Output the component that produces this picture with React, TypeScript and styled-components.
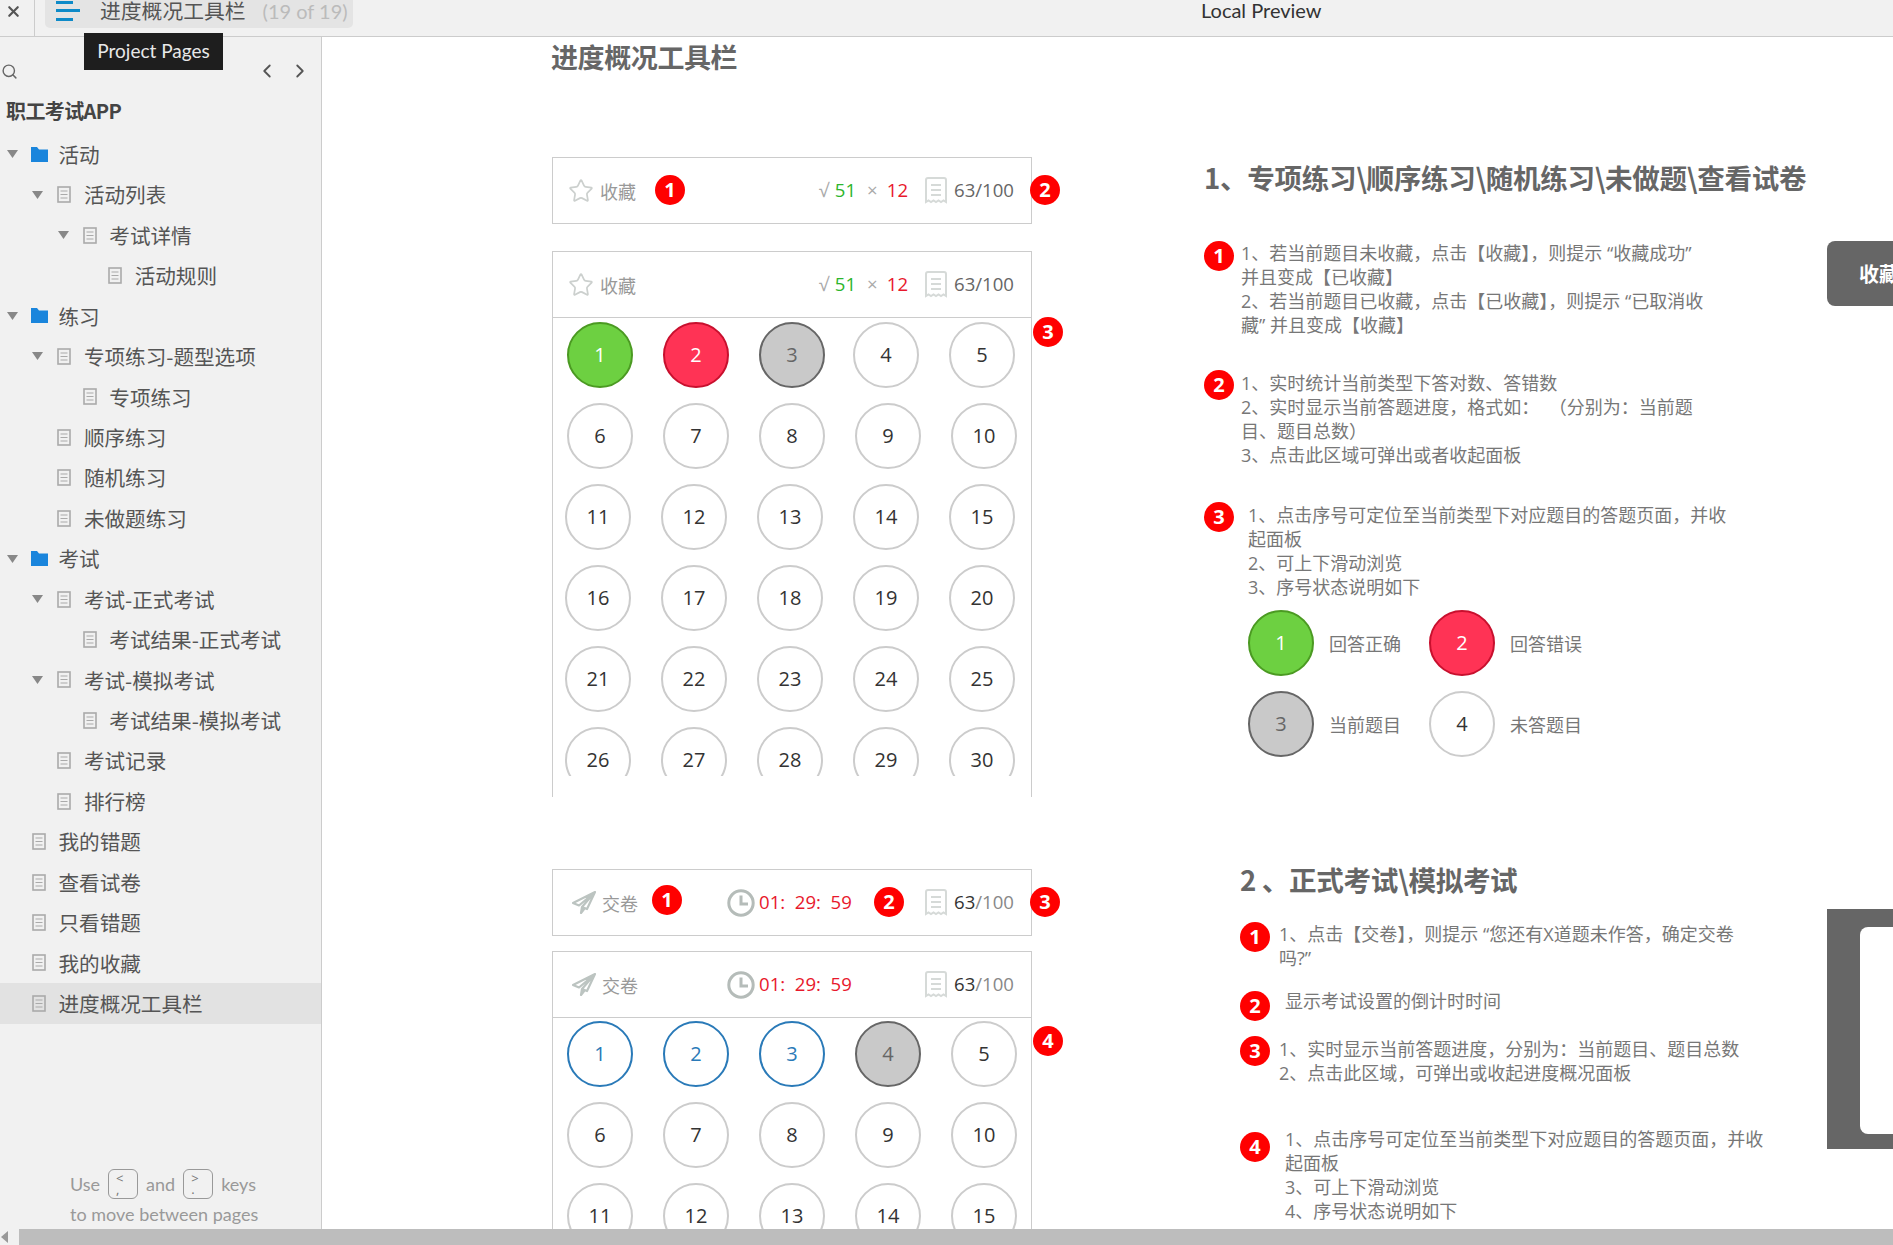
import React from "react";
import styled, { createGlobalStyle, css } from "styled-components";
import { ChevronLeft, ChevronRight, Search, Star, X } from "lucide-react";

const CJK = `"Open Sans", "Noto Sans CJK SC", sans-serif`;

const Global = createGlobalStyle`
  html, body { margin: 0; padding: 0; background: #fff; }
  body { font-family: ${CJK}; overflow: hidden; }
  * { box-sizing: border-box; }
`;

const Page = styled.div`
  position: relative;
  width: 1893px;
  height: 1245px;
  overflow: hidden;
  display: flex;
  flex-direction: column;
`;

/* ---------- top bar ---------- */
const TopBar = styled.header`
  height: 37px;
  flex: none;
  display: flex;
  align-items: flex-start;
  background: #f1f1f1;
  border-bottom: 1px solid #ccc;
`;
const CloseBox = styled.div`
  width: 35px;
  height: 36px;
  flex: none;
  border-right: 1px solid #ccc;
  padding: 3px 0 0 5px;
  color: #555;
  display: flex;
`;
const PageTab = styled.div`
  margin-left: 10px;
  width: 308px;
  height: 28px;
  flex: none;
  background: #e4e4e4;
  border-radius: 0 0 5px 5px;
  display: flex;
  align-items: center;
  padding-left: 11px;
`;
const TabTitle = styled.span`
  margin-left: 20px;
  font: 400 20.8px/28px "Noto Sans CJK SC", sans-serif;
  color: #555;
  position: relative;
  top: -4px;
  white-space: nowrap;
`;
const TabCount = styled.span`
  margin-left: 17px;
  font: 400 20px/28px Lato, sans-serif;
  color: #bbb;
  position: relative;
  top: -3px;
  white-space: nowrap;
`;
const PreviewLabel = styled.div`
  margin-left: 848px;
  font: 400 20px/20px Lato, sans-serif;
  color: #333;
  white-space: nowrap;
`;
const Tooltip = styled.div`
  position: absolute;
  left: 84px;
  top: 33px;
  width: 139px;
  height: 37px;
  background: #1e1e1e;
  color: #e8e8e8;
  font: 400 19px/36px Lato, sans-serif;
  text-align: center;
  z-index: 5;
`;

/* ---------- body ---------- */
const Body = styled.div`
  flex: 1;
  min-height: 0;
  display: flex;
`;

/* ---------- sidebar ---------- */
const Sidebar = styled.aside`
  width: 322px;
  flex: none;
  background: #f1f1f1;
  border-right: 1px solid #ccc;
  overflow: hidden;
`;
const SearchRow = styled.div`
  height: 43px;
  display: flex;
  align-items: flex-end;
  padding: 0 10px 0 1px;
  color: #666;
`;
const Pager = styled.div`
  margin-left: auto;
  display: flex;
  gap: 11px;
  color: #555;
  margin-bottom: -2px;
`;
const ProjectTitle = styled.div`
  margin-top: 16px;
  padding-left: 6px;
  font: 700 20px/30px "Noto Sans CJK SC", sans-serif;
  color: #444;
  height: 38px;
  letter-spacing: -0.6px;
`;
const Tree = styled.div`
  display: flex;
  flex-direction: column;
`;
const Row = styled.div<{ $level: number; $active?: boolean }>`
  height: 40.45px;
  display: flex;
  align-items: center;
  padding-left: ${(p) => 7 + p.$level * 25.4}px;
  font: 400 20.6px/1 "Noto Sans CJK SC", sans-serif;
  color: #555;
  background: ${(p) => (p.$active ? "#e2e2e2" : "transparent")};
  white-space: nowrap;
`;
const ArrowSlot = styled.span`
  width: 24px;
  flex: none;
  display: flex;
`;
const IconSlot = styled.span`
  width: 27.5px;
  flex: none;
  display: flex;
`;
const SideHint = styled.div`
  margin-top: 145px;
  padding-left: 70px;
  font: 400 18px/30px Lato, sans-serif;
  color: #999;
  white-space: nowrap;
`;
const HintLine = styled.div`
  display: flex;
  align-items: center;
  height: 30px;
  gap: 8px;
`;
const KeyCap = styled.span`
  width: 30px;
  height: 30px;
  border: 1.5px solid #999;
  border-radius: 6px;
  font: 400 13px/11px "Open Sans", sans-serif;
  padding: 3px 0 0 7px;
  color: #777;
  white-space: pre;
`;

/* ---------- main canvas ---------- */
const Main = styled.main`
  flex: 1;
  min-width: 0;
  background: #fff;
  overflow: hidden;
  display: flex;
  align-items: flex-start;
  padding-left: 230px;
`;
const LeftColumn = styled.div`
  width: 652px;
  flex: none;
`;
const NotesColumn = styled.div`
  width: 623px;
  flex: none;
`;
const SideColumn = styled.div`
  flex: 1;
  min-width: 0;
`;
const PageHeading = styled.h1`
  margin: 3px 0 0 -1px;
  font: 700 27px/34px "Noto Sans CJK SC", sans-serif;
  color: #666;
  letter-spacing: -0.4px;
`;
const Panel = styled.div<{ $top: number; $open?: boolean }>`
  position: relative;
  width: 480px;
  margin-top: ${(p) => p.$top}px;
  border: 1px solid #ccc;
  ${(p) => p.$open && css`border-bottom: none;`}
`;
const PanelHeader = styled.div<{ $rule?: boolean }>`
  height: 65px;
  display: flex;
  align-items: center;
  padding: 0 17px 0 15px;
  font: 400 18.6px/1 ${CJK};
  ${(p) => p.$rule && css`
    height: 66px;
    border-bottom: 1px solid #ccc;
  `}
`;
const ActionLabel = styled.span`
  margin-left: 6px;
  font: 400 18px/1 "Noto Sans CJK SC", sans-serif;
  color: #999;
  white-space: nowrap;
`;
const Stats = styled.div`
  margin-left: auto;
  display: flex;
  align-items: center;
`;
const Stat = styled.span<{ $color: string; $gap?: number }>`
  color: ${(p) => p.$color};
  margin-left: ${(p) => p.$gap ?? 0}px;
  white-space: nowrap;
`;
const Timer = styled.span`
  position: absolute;
  left: 174px;
  display: flex;
  align-items: center;
  gap: 4px;
  color: #e8182c;
  white-space: pre;
`;
const Progress = styled.span`
  margin-left: 6px;
  color: #666;
  white-space: nowrap;
`;
const ProgressDark = styled.b`
  font-weight: 400;
  color: #333;
`;
const ProgressMuted = styled.span`
  color: #888;
`;
const Marker = styled.span<{ $x: number; $y: number }>`
  position: absolute;
  left: ${(p) => p.$x}px;
  top: ${(p) => p.$y}px;
  width: 30px;
  height: 30px;
  border-radius: 50%;
  background: #f00;
  color: #fff;
  font: 700 20px/30px "Open Sans", sans-serif;
  text-align: center;
`;
const GridClip = styled.div<{ $height: number; $pad: number }>`
  height: ${(p) => p.$height}px;
  padding-top: ${(p) => p.$pad}px;
  overflow: hidden;
`;
const CircleRow = styled.div<{ $inset: number }>`
  display: flex;
  gap: 30px;
  padding-left: ${(p) => p.$inset}px;
  margin-bottom: 15px;
`;
type Tone = "plain" | "right" | "wrong" | "current" | "done";
const tones: Record<Tone, string> = {
  plain: "background:#fff;border:2px solid #ccc;color:#333;",
  right: "background:#6dd041;border:2px solid #4b9a22;color:#fff;",
  wrong: "background:#ff3355;border:2px solid #c8102e;color:#fff;",
  current: "background:#c9c9c9;border:2px solid #666;color:#666;",
  done: "background:#fff;border:2px solid #2a7ab8;color:#2a7ab8;",
};
const Circle = styled.span<{ $tone: Tone; $shift?: number }>`
  width: 66px;
  height: 66px;
  flex: none;
  border-radius: 50%;
  ${(p) => tones[p.$tone]}
  margin-left: ${(p) => p.$shift ?? 0}px;
  display: flex;
  align-items: center;
  justify-content: center;
  font: 400 20px/1 "Open Sans", sans-serif;
`;

/* ---------- notes ---------- */
const NoteHeading = styled.h2<{ $top: number; $left?: number }>`
  margin: ${(p) => p.$top}px 0 0 ${(p) => p.$left ?? 0}px;
  font: 700 27.6px/34px "Noto Sans CJK SC", sans-serif;
  color: #666;
  white-space: nowrap;
  letter-spacing: -0.35px;
`;
const Note = styled.div<{ $top: number; $left?: number }>`
  display: flex;
  align-items: flex-start;
  margin: ${(p) => p.$top}px 0 0 ${(p) => p.$left ?? 0}px;
`;
const NoteBadge = styled.span`
  width: 30px;
  height: 30px;
  flex: none;
  border-radius: 50%;
  background: #f00;
  color: #fff;
  font: 700 20px/30px "Open Sans", sans-serif;
  text-align: center;
`;
const NoteText = styled.div<{ $indent: number; $drop?: number }>`
  margin: ${(p) => p.$drop ?? 0}px 0 0 ${(p) => p.$indent}px;
  font: 400 18px/24px ${CJK};
  color: #777;
  white-space: nowrap;
`;
const Legend = styled.div`
  margin: 11px 0 0 44px;
  display: grid;
  grid-template-columns: 181px 181px;
  row-gap: 15px;
`;
const LegendItem = styled.div`
  display: flex;
  align-items: center;
  gap: 15px;
  font: 400 18px/1 "Noto Sans CJK SC", sans-serif;
  color: #777;
`;
const Toast = styled.div`
  margin-top: 204px;
  height: 65px;
  background: #666;
  border-radius: 8px 0 0 8px;
  padding-left: 32px;
  color: #fff;
  font: 700 20px/65px "Noto Sans CJK SC", sans-serif;
  white-space: nowrap;
  overflow: hidden;
`;
const DarkFrame = styled.div`
  margin-top: 603px;
  height: 240px;
  background: #666;
  padding: 18px 0 15px 33px;
`;
const FrameInner = styled.div`
  height: 100%;
  background: #fff;
  border-radius: 8px 0 0 8px;
`;
const ScrollBar = styled.div`
  height: 16px;
  flex: none;
  display: flex;
  align-items: center;
  background: #f1f1f1;
`;
const ScrollThumb = styled.div`
  margin-left: 10px;
  flex: 1;
  height: 16px;
  background: #bdbdbd;
`;

/* ---------- drawings ---------- */
const Hamburger = () => (
  <svg width="24" height="22" viewBox="0 0 24 22" style={{ marginTop: -6 }}>
    <g fill="#0e8ac8">
      <rect x="0" y="1" width="17" height="3" />
      <rect x="0" y="9" width="24" height="3" />
      <rect x="0" y="18" width="17" height="3" />
    </g>
  </svg>
);
const Arrow = () => (
  <svg width="11" height="8" viewBox="0 0 11 8">
    <path d="M0 0h11L5.5 8z" fill="#888" />
  </svg>
);
const FolderIcon = () => (
  <svg width="17" height="15" viewBox="0 0 17 15">
    <path d="M0 0h6l2 2.5h9V15H0z" fill="#1a85dc" />
  </svg>
);
const FileIcon = () => (
  <svg width="14" height="17" viewBox="0 0 14 17" style={{ marginLeft: 1 }}>
    <rect x="1" y="1" width="12" height="15" fill="none" stroke="#aaa" strokeWidth="1.6" />
    <path d="M3.5 5h7M3.5 8.5h7M3.5 12h7" stroke="#aaa" strokeWidth="1.2" />
  </svg>
);
const ReceiptIcon = () => (
  <svg width="24" height="27" viewBox="0 0 24 27" style={{ marginLeft: 16 }}>
    <path
      d="M2 25V3a2 2 0 0 1 2-2h16a2 2 0 0 1 2 2v22l-2.5-1.6L17 25l-2.5-1.6L12 25l-2.5-1.6L7 25l-2.5-1.6z"
      fill="none"
      stroke="#d6dad8"
      strokeWidth="2"
    />
    <path d="M7 8h10M7 13h10M7 18h10" stroke="#d6dad8" strokeWidth="2" />
  </svg>
);
const PlaneIcon = () => (
  <svg width="24" height="23" viewBox="0 0 24 23" style={{ marginLeft: 4 }}>
    <path
      d="M23 1 1 12l6 2.5L23 1 10 16l5 2zM10 16l-1 6 3.5-4.5"
      fill="none"
      stroke="#bcc4c1"
      strokeWidth="2.2"
      strokeLinejoin="round"
    />
  </svg>
);
const ClockIcon = () => (
  <svg width="28" height="28" viewBox="0 0 28 28">
    <circle cx="14" cy="14" r="12.2" fill="none" stroke="#b5bcb9" strokeWidth="3" />
    <path d="M14 6.5V15h7" fill="none" stroke="#b5bcb9" strokeWidth="3" />
  </svg>
);

/* ---------- data ---------- */
type TreeNode = { level: number; label: string; arrow?: boolean; folder?: boolean; active?: boolean };
const treeNodes: TreeNode[] = [
  { level: 0, label: "活动", arrow: true, folder: true },
  { level: 1, label: "活动列表", arrow: true },
  { level: 2, label: "考试详情", arrow: true },
  { level: 3, label: "活动规则" },
  { level: 0, label: "练习", arrow: true, folder: true },
  { level: 1, label: "专项练习-题型选项", arrow: true },
  { level: 2, label: "专项练习" },
  { level: 1, label: "顺序练习" },
  { level: 1, label: "随机练习" },
  { level: 1, label: "未做题练习" },
  { level: 0, label: "考试", arrow: true, folder: true },
  { level: 1, label: "考试-正式考试", arrow: true },
  { level: 2, label: "考试结果-正式考试" },
  { level: 1, label: "考试-模拟考试", arrow: true },
  { level: 2, label: "考试结果-模拟考试" },
  { level: 1, label: "考试记录" },
  { level: 1, label: "排行榜" },
  { level: 0, label: "我的错题" },
  { level: 0, label: "查看试卷" },
  { level: 0, label: "只看错题" },
  { level: 0, label: "我的收藏" },
  { level: 0, label: "进度概况工具栏", active: true },
];

const range = (from: number) => [0, 1, 2, 3, 4].map((i) => from + i);

const practiceTone = (n: number): Tone =>
  n === 1 ? "right" : n === 2 ? "wrong" : n === 3 ? "current" : "plain";
const examTone = (n: number): Tone =>
  n <= 3 ? "done" : n === 4 ? "current" : "plain";

const Grid = ({ rows, tone, shiftFirst }: { rows: { from: number; inset: number }[]; tone: (n: number) => Tone; shiftFirst?: boolean }) => (
  <>
    {rows.map((r, ri) => (
      <CircleRow key={r.from} $inset={r.inset}>
        {range(r.from).map((n) => (
          <Circle key={n} $tone={tone(n)} $shift={shiftFirst && ri === 0 && n === 4 ? -2 : 0}>
            {n}
          </Circle>
        ))}
      </CircleRow>
    ))}
  </>
);

const PracticeHeader = ({ rule }: { rule?: boolean }) => (
  <PanelHeader $rule={rule}>
    <Star size={26} color="#ccd0ce" strokeWidth={1.6} />
    <ActionLabel>收藏</ActionLabel>
    <Stats>
      <Stat $color="#aaa">√</Stat>
      <Stat $color="#2db52d" $gap={6}>51</Stat>
      <Stat $color="#aaa" $gap={11}>×</Stat>
      <Stat $color="#e8182c" $gap={9}>12</Stat>
      <ReceiptIcon />
      <Progress>63/100</Progress>
    </Stats>
  </PanelHeader>
);

const ExamHeader = ({ rule }: { rule?: boolean }) => (
  <PanelHeader $rule={rule}>
    <PlaneIcon />
    <ActionLabel>交卷</ActionLabel>
    <Timer>
      <ClockIcon />
      01:  29:  59
    </Timer>
    <Stats>
      <ReceiptIcon />
      <Progress>
        <ProgressDark>63</ProgressDark>
        <ProgressMuted>/100</ProgressMuted>
      </Progress>
    </Stats>
  </PanelHeader>
);

export default function App() {
  return (
    <Page>
      <Global />
      <TopBar>
        <CloseBox>
          <X size={17} strokeWidth={3} />
        </CloseBox>
        <PageTab>
          <Hamburger />
          <TabTitle>进度概况工具栏</TabTitle>
          <TabCount>(19 of 19)</TabCount>
        </PageTab>
        <PreviewLabel>Local Preview</PreviewLabel>
      </TopBar>
      <Tooltip>Project Pages</Tooltip>
      <Body>
        <Sidebar>
          <SearchRow>
            <Search size={17} />
            <Pager>
              <ChevronLeft size={22} />
              <ChevronRight size={22} />
            </Pager>
          </SearchRow>
          <ProjectTitle>职工考试APP</ProjectTitle>
          <Tree>
            {treeNodes.map((node) => (
              <Row key={node.label} $level={node.level} $active={node.active}>
                <ArrowSlot>{node.arrow && <Arrow />}</ArrowSlot>
                <IconSlot>{node.folder ? <FolderIcon /> : <FileIcon />}</IconSlot>
                {node.label}
              </Row>
            ))}
          </Tree>
          <SideHint>
            <HintLine>
              Use <KeyCap>{"<\n,"}</KeyCap> and <KeyCap>{">\n."}</KeyCap> keys
            </HintLine>
            <HintLine>to move between pages</HintLine>
          </SideHint>
        </Sidebar>
        <Main>
          <LeftColumn>
            <PageHeading>进度概况工具栏</PageHeading>
            <Panel $top={83}>
              <PracticeHeader />
              <Marker $x={102} $y={17}>1</Marker>
              <Marker $x={477} $y={17}>2</Marker>
            </Panel>
            <Panel $top={27} $open>
              <PracticeHeader rule />
              <Marker $x={480} $y={65}>3</Marker>
              <GridClip $height={479} $pad={4}>
                <GridClip $height={454} $pad={0}>
                  <Grid
                    tone={practiceTone}
                    shiftFirst
                    rows={[
                      { from: 1, inset: 14 },
                      { from: 6, inset: 14 },
                      { from: 11, inset: 12 },
                      { from: 16, inset: 12 },
                      { from: 21, inset: 12 },
                      { from: 26, inset: 12 },
                    ]}
                  />
                </GridClip>
              </GridClip>
            </Panel>
            <Panel $top={72}>
              <ExamHeader />
              <Marker $x={99} $y={15}>1</Marker>
              <Marker $x={321} $y={17}>2</Marker>
              <Marker $x={477} $y={17}>3</Marker>
            </Panel>
            <Panel $top={15} $open>
              <ExamHeader rule />
              <Marker $x={480} $y={74}>4</Marker>
              <GridClip $height={300} $pad={3}>
                <Grid
                  tone={examTone}
                  rows={[
                    { from: 1, inset: 14 },
                    { from: 6, inset: 14 },
                    { from: 11, inset: 14 },
                  ]}
                />
              </GridClip>
            </Panel>
          </LeftColumn>
          <NotesColumn>
            <NoteHeading $top={123}>1、专项练习\顺序练习\随机练习\未做题\查看试卷</NoteHeading>
            <Note $top={47}>
              <NoteBadge>1</NoteBadge>
              <NoteText $indent={7}>
                1、若当前题目未收藏，点击【收藏】，则提示 “收藏成功”
                <br />
                并且变成【已收藏】
                <br />
                2、若当前题目已收藏，点击【已收藏】，则提示 “已取消收
                <br />
                藏” 并且变成【收藏】
              </NoteText>
            </Note>
            <Note $top={33}>
              <NoteBadge>2</NoteBadge>
              <NoteText $indent={7} $drop={1}>
                1、实时统计当前类型下答对数、答错数
                <br />
                2、实时显示当前答题进度，格式如：&nbsp;&nbsp;（分别为：当前题
                <br />
                目、题目总数）
                <br />
                3、点击此区域可弹出或者收起面板
              </NoteText>
            </Note>
            <Note $top={35}>
              <NoteBadge>3</NoteBadge>
              <NoteText $indent={14} $drop={1}>
                1、点击序号可定位至当前类型下对应题目的答题页面，并收
                <br />
                起面板
                <br />
                2、可上下滑动浏览
                <br />
                3、序号状态说明如下
              </NoteText>
            </Note>
            <Legend>
              <LegendItem>
                <Circle $tone="right">1</Circle>回答正确
              </LegendItem>
              <LegendItem>
                <Circle $tone="wrong">2</Circle>回答错误
              </LegendItem>
              <LegendItem>
                <Circle $tone="current">3</Circle>当前题目
              </LegendItem>
              <LegendItem>
                <Circle $tone="plain">4</Circle>未答题目
              </LegendItem>
            </Legend>
            <NoteHeading $top={105} $left={36}>2 、正式考试\模拟考试</NoteHeading>
            <Note $top={26} $left={36}>
              <NoteBadge>1</NoteBadge>
              <NoteText $indent={9}>
                1、点击【交卷】，则提示 “您还有X道题未作答，确定交卷
                <br />
                吗?”
              </NoteText>
            </Note>
            <Note $top={21} $left={36}>
              <NoteBadge>2</NoteBadge>
              <NoteText $indent={15} $drop={-2}>显示考试设置的倒计时时间</NoteText>
            </Note>
            <Note $top={15} $left={36}>
              <NoteBadge>3</NoteBadge>
              <NoteText $indent={9} $drop={1}>
                1、实时显示当前答题进度，分别为：当前题目、题目总数
                <br />
                2、点击此区域，可弹出或收起进度概况面板
              </NoteText>
            </Note>
            <Note $top={47} $left={36}>
              <NoteBadge>4</NoteBadge>
              <NoteText $indent={15} $drop={-5}>
                1、点击序号可定位至当前类型下对应题目的答题页面，并收
                <br />
                起面板
                <br />
                3、可上下滑动浏览
                <br />
                4、序号状态说明如下
              </NoteText>
            </Note>
          </NotesColumn>
          <SideColumn>
            <Toast>收藏成功</Toast>
            <DarkFrame>
              <FrameInner />
            </DarkFrame>
          </SideColumn>
        </Main>
      </Body>
      <ScrollBar>
        <svg width="8" height="12" viewBox="0 0 8 12" style={{ marginLeft: 1 }}>
          <path d="M7 0v12L0 6z" fill="#999" />
        </svg>
        <ScrollThumb />
      </ScrollBar>
    </Page>
  );
}
